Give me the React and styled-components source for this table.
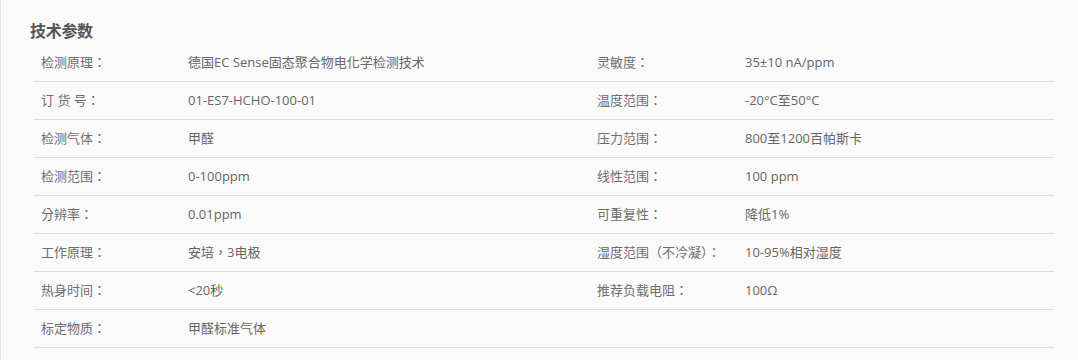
import React from "react";
import styled, { createGlobalStyle } from "styled-components";

const GlobalStyle = createGlobalStyle`
  html, body { margin: 0; padding: 0; background: #fafafa; }
  body { font-family: "Open Sans", "Noto Sans CJK TC", sans-serif; }
`;

const Page = styled.div`
  box-sizing: border-box;
  min-height: 360px;
  background: #fafafa;
  border-left: 1px solid #e2e2e2;
  padding: 17px 24px 0 29px;
`;

const Title = styled.h3`
  margin: 0;
  font-family: "Noto Sans CJK SC", sans-serif;
  font-size: 16px;
  font-weight: 700;
  line-height: 26px;
  color: #555;
  letter-spacing: -0.3px;
`;

const Table = styled.div`
  margin: 1px 0 0 4px;
  display: grid;
  grid-template-columns: 147px 409px 148px 1fr;
`;

const Cell = styled.div`
  box-sizing: border-box;
  height: 38px;
  line-height: 37px;
  padding-left: 7px;
  border-bottom: 1px solid #dcdcdc;
  font-family: "Open Sans", "Noto Sans CJK TC", sans-serif;
  font-size: 13px;
  color: ${(p) => (p.$label ? "#6e6e6e" : "#666")};
  white-space: nowrap;
`;

const rows = [
  ["检测原理：", "德国EC Sense固态聚合物电化学检测技术", "灵敏度：", "35±10 nA/ppm"],
  ["订 货 号：", "01-ES7-HCHO-100-01", "温度范围：", "-20°C至50°C"],
  ["检测气体：", "甲醛", "压力范围：", "800至1200百帕斯卡"],
  ["检测范围：", "0-100ppm", "线性范围：", "100 ppm"],
  ["分辨率：", "0.01ppm", "可重复性：", "降低1%"],
  ["工作原理：", "安培，3电极", "湿度范围（不冷凝）：", "10-95%相对湿度"],
  ["热身时间：", "<20秒", "推荐负载电阻：", "100Ω"],
  ["标定物质：", "甲醛标准气体", "", ""],
];

export default function App() {
  return (
    <>
      <GlobalStyle />
      <Page>
        <Title>技术参数</Title>
        <Table>
          {rows.map((r, i) => (
            <React.Fragment key={i}>
              <Cell $label>{r[0]}</Cell>
              <Cell>{r[1]}</Cell>
              <Cell $label>{r[2]}</Cell>
              <Cell>{r[3]}</Cell>
            </React.Fragment>
          ))}
        </Table>
      </Page>
    </>
  );
}
